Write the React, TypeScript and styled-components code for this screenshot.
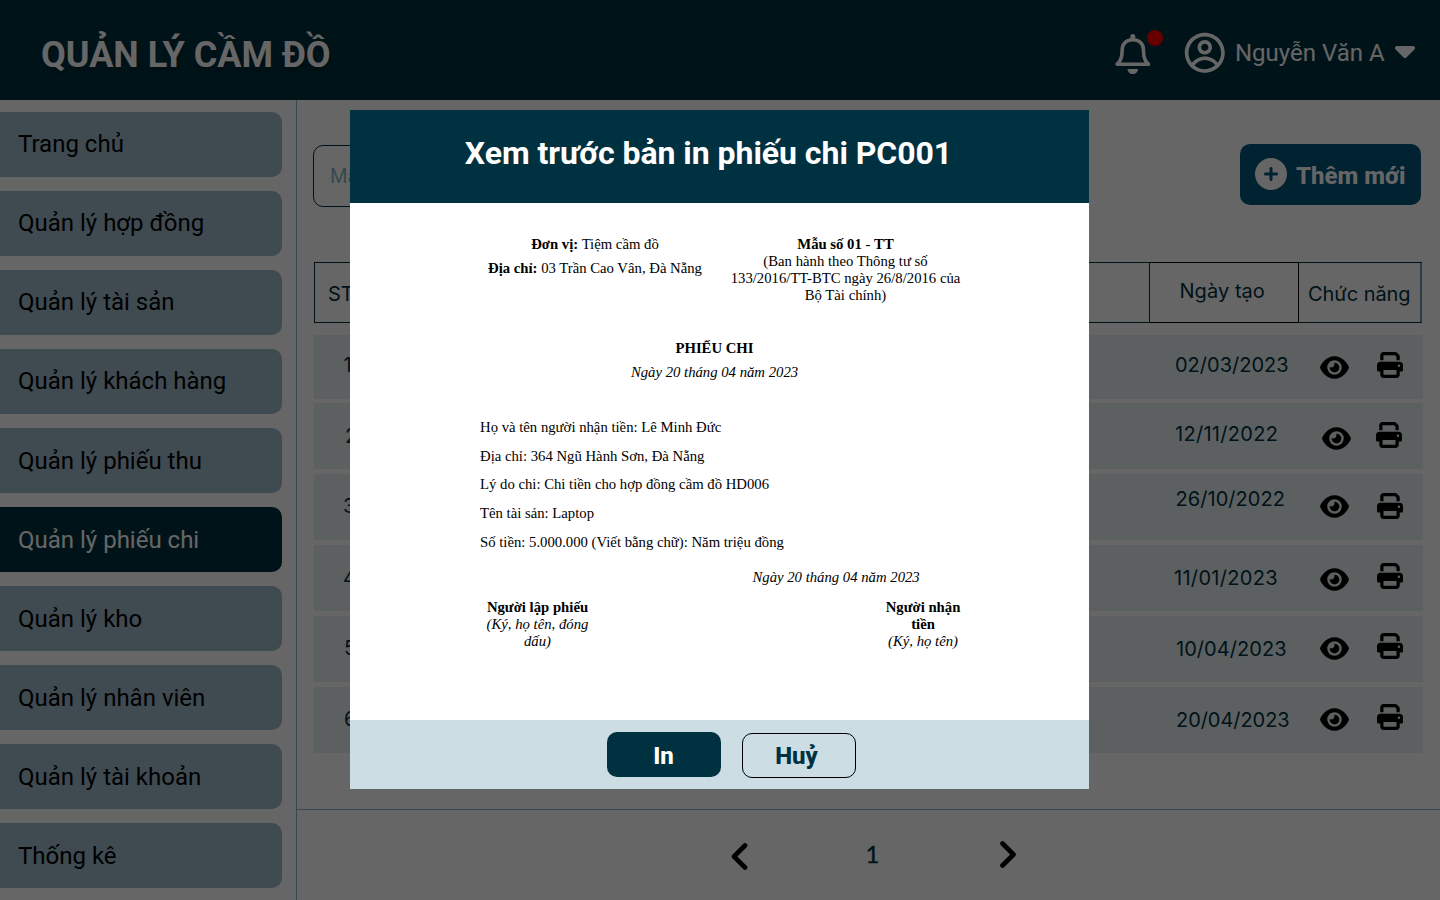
import React from "react";
import styled, { createGlobalStyle } from "styled-components";
import { CgProfile } from "react-icons/cg";
import { FaCaretDown, FaCirclePlus, FaEye, FaPrint } from "react-icons/fa6";

const NAVY = "#003140";

const GlobalStyle = createGlobalStyle`
  *, *::before, *::after { box-sizing: border-box; }
  body { margin: 0; background: #fff; font-family: Roboto, "Liberation Sans", sans-serif; overflow: hidden; }
  p, h1, h2 { margin: 0; }
  svg { display: block; flex: none; }
`;

const Page = styled.div`
  position: relative;
  display: flex;
  flex-direction: column;
  width: 1440px;
  height: 900px;
  overflow: hidden;
  background: #fff;
`;

const TopBar = styled.header`
  display: flex;
  flex: none;
  height: 100px;
  background: ${NAVY};
  color: #fff;
`;

const Brand = styled.h1`
  margin: 34px auto 0 41px;
  font-size: 36px;
  line-height: 42px;
  font-weight: 700;
  white-space: nowrap;
  text-shadow: 0 4px 4px rgba(0, 0, 0, 0.25);
`;

const BellButton = styled.div`
  position: relative;
  width: 40px;
  height: 40px;
  margin: 34px 30.5px 0 0;
`;

const AlertDot = styled.span`
  position: absolute;
  left: 34.5px;
  top: -4px;
  width: 16px;
  height: 16px;
  border-radius: 50%;
  background: #ff0000;
`;

const UserMenu = styled.div`
  display: flex;
  align-items: flex-start;
  margin-right: 19px;
  padding-top: 31.2px;
`;

const UserName = styled.span`
  width: 154px;
  margin: 7.8px 0 0 8px;
  font-size: 24px;
  line-height: 28px;
  white-space: nowrap;
`;

const CaretBox = styled.span`
  margin-top: 2.8px;
`;

const Body = styled.div`
  display: flex;
  flex: 1;
  min-height: 0;
`;

const Sidebar = styled.nav`
  display: flex;
  flex: none;
  flex-direction: column;
  gap: 14px;
  width: 297px;
  padding: 12px 14px 0 0;
  border-right: 1px solid #8ab4c4;
`;

const NavItem = styled.a<{ $active?: boolean }>`
  display: flex;
  flex: none;
  align-items: center;
  height: 65px;
  padding: 0 0 2px 18px;
  border-radius: 0 10px 10px 0;
  background: ${(p) => (p.$active ? NAVY : "#9dbbca")};
  color: ${(p) => (p.$active ? "#fff" : "#000")};
  font-size: 24px;
  line-height: 28px;
  white-space: nowrap;

  &:nth-child(n + 5) {
    padding-bottom: 0;
  }
`;

const Main = styled.main`
  display: flex;
  flex: 1;
  flex-direction: column;
  min-width: 0;
`;

const Toolbar = styled.div`
  display: flex;
  justify-content: space-between;
  height: 162px;
  padding: 44px 19px 0 16px;
`;

const SearchField = styled.div`
  width: 400px;
  height: 62px;
  margin-top: 1px;
  padding: 18px 16px;
  border: 1px solid ${NAVY};
  border-radius: 10px;
  color: #8ab4c4;
  font-size: 20px;
  line-height: 24px;
`;

const AddButton = styled.div`
  display: flex;
  align-items: center;
  gap: 9px;
  width: 181px;
  height: 61px;
  padding: 0 0 2px 15px;
  border-radius: 10px;
  background: #00567a;
  color: #fff;
  font-size: 24px;
  font-weight: 800;
  white-space: nowrap;
`;

const AddLabel = styled.span`
  padding-top: 5px;
`;

const TableHead = styled.div`
  display: flex;
  flex: none;
  width: 1108px;
  height: 61px;
  margin-left: 17px;
  border: solid ${NAVY};
  border-width: 1px 0;
  color: ${NAVY};
  font-family: Inter, sans-serif;
  font-size: 20px;
  line-height: 24px;
`;

const IndexHead = styled.div`
  width: 835px;
  padding: 19px 13px;
  border-left: 1px solid ${NAVY};
`;

const DateHead = styled.div`
  width: 150px;
  margin: -1px 0;
  padding: 16px 0 0 29.5px;
  border: 1px solid #000;
  border-left-color: ${NAVY};
  letter-spacing: 0.05px;
`;

const ActionHead = styled.div`
  flex: 1;
  padding: 19px 0 0 9px;
  border-right: 2px solid #6b9bab;
  letter-spacing: -0.05px;
  white-space: nowrap;
`;

const TableBody = styled.div`
  display: flex;
  flex-direction: column;
  width: 1109px;
  margin: 12px 0 0 17px;
`;

const Row = styled.div<{ $height: number; $gap: number }>`
  display: flex;
  flex: none;
  height: ${(p) => p.$height}px;
  margin-bottom: ${(p) => p.$gap}px;
  background: #e6f0f2;
  color: ${NAVY};
  font-family: Inter, sans-serif;
  font-size: 20px;
  line-height: 24px;
`;

const IndexCell = styled.div<{ $top: number; $left: number }>`
  width: 860px;
  padding: ${(p) => p.$top}px 0 0 ${(p) => p.$left}px;
`;

const DateCell = styled.div<{ $top: number; $left: number; $tracking: number }>`
  width: 146px;
  padding: ${(p) => p.$top}px 0 0 ${(p) => p.$left}px;
  letter-spacing: ${(p) => p.$tracking}px;
  white-space: nowrap;
`;

const IconCell = styled.div<{ $width: number; $top: number; $left: number }>`
  width: ${(p) => p.$width}px;
  padding: ${(p) => p.$top}px 0 0 ${(p) => p.$left}px;
  color: #000;
`;

const Pager = styled.footer`
  display: flex;
  flex: 1;
  margin-top: 56px;
  padding: 33px 0 0 434px;
  border-top: 1px solid #8ab4c4;
  color: #000;
`;

const PageNumber = styled.span`
  width: 134px;
  margin: -3px 0 0 117.5px;
  color: ${NAVY};
  font-family: Lato, sans-serif;
  font-size: 24px;
  line-height: 28px;
  -webkit-text-stroke: 0.35px ${NAVY};
`;

const ArrowBox = styled.span<{ $raised?: boolean }>`
  width: 17px;
  margin-top: ${(p) => (p.$raised ? -2 : 0)}px;
`;

const Overlay = styled.div`
  position: absolute;
  inset: 0;
  padding: 110px 0 0 350px;
  background: rgba(0, 0, 0, 0.6);
`;

const Dialog = styled.section`
  display: flex;
  flex-direction: column;
  width: 739px;
  height: 679px;
  background: #fff;
`;

const DialogTitle = styled.h2`
  flex: none;
  height: 93px;
  padding: 24px 22px 0 0;
  background: ${NAVY};
  color: #fff;
  font-size: 32px;
  line-height: 38px;
  font-weight: 700;
  letter-spacing: -0.04px;
  text-align: center;
  white-space: nowrap;
`;

const Sheet = styled.div`
  flex: 1;
  padding: 33px 0 0 130px;
  color: #000;
  font-family: "Liberation Serif", "Times New Roman", serif;
  font-size: 14.72px;
  line-height: 17px;
  white-space: nowrap;
`;

const SheetTop = styled.div`
  display: flex;
  height: 100px;
  text-align: center;
`;

const Issuer = styled.div`
  width: 230px;
  line-height: 24px;
  margin-top: -4px;
`;

const FormCode = styled.div`
  width: 271px;
`;

const SheetTitle = styled.div`
  width: 469px;
  height: 77px;
  line-height: 24px;
  text-align: center;
`;

const Details = styled.div`
  line-height: 28.7px;
`;

const SignDate = styled.p`
  padding: 12px 0 0 272.5px;
  font-style: italic;
`;

const Signatures = styled.div`
  display: flex;
  justify-content: space-between;
  width: 486px;
  padding: 13px 0 0 0;
  text-align: center;
`;

const Signature = styled.div<{ $width: number }>`
  width: ${(p) => p.$width}px;
`;

const DialogFooter = styled.div`
  display: flex;
  flex: none;
  gap: 21px;
  height: 69px;
  padding: 12px 0 0 257px;
  background: #ccdde3;
`;

const DialogButton = styled.div<{ $primary?: boolean }>`
  width: 114px;
  height: 45px;
  margin-top: ${(p) => (p.$primary ? 0 : 1)}px;
  padding: ${(p) => (p.$primary ? "10px 1px 0 0" : "8px 5px 0 0")};
  border: ${(p) => (p.$primary ? "none" : "1px solid #000")};
  border-radius: 10px;
  background: ${(p) => (p.$primary ? NAVY : "transparent")};
  color: ${(p) => (p.$primary ? "#fff" : NAVY)};
  font-size: 24px;
  line-height: 28px;
  font-weight: 800;
  text-align: center;
`;

const BellIcon = () => (
  <svg width="40" height="40" viewBox="0 0 40 40" fill="none">
    <path
      d="M4.1 30.2C7.4 27.3 9.1 22.6 9.1 17.2V15.8C9.1 9.6 13.6 5.8 19.8 5.8S30.5 9.6 30.5 15.8V17.2C30.5 22.6 32.2 27.3 35.5 30.2Z"
      stroke="currentColor"
      strokeWidth="3.6"
      strokeLinejoin="round"
    />
    <path d="M17.3 5.5V2.5a2.5 2.5 0 0 1 5 0v3z" fill="currentColor" />
    <path d="M14.5 34.9h10.6a5.3 5.2 0 0 1-10.6 0z" fill="currentColor" />
  </svg>
);

const Chevron = ({ points }: { points: string }) => (
  <svg width="17" height="27" viewBox="0 0 17 27" fill="none">
    <polyline
      points={points}
      stroke="currentColor"
      strokeWidth="4.6"
      strokeLinecap="round"
      strokeLinejoin="round"
    />
  </svg>
);

const navItems = [
  "Trang chủ",
  "Quản lý hợp đồng",
  "Quản lý tài sản",
  "Quản lý khách hàng",
  "Quản lý phiếu thu",
  "Quản lý phiếu chi",
  "Quản lý kho",
  "Quản lý nhân viên",
  "Quản lý tài khoản",
  "Thống kê",
];

const rows = [
  { date: "02/03/2023", height: 64, gap: 4, num: [18, 29.5], day: [18, 1, 0], eye: [17.5, 0], print: [17, 1] },
  { date: "12/11/2022", height: 66, gap: 5, num: [21, 31], day: [19, 1, 0.3], eye: [20.5, 2], print: [19, 0] },
  { date: "26/10/2022", height: 66, gap: 5, num: [20, 29], day: [13, 1.5, 0.05], eye: [17.5, 0], print: [19, 1] },
  { date: "11/01/2023", height: 66, gap: 5, num: [21, 29], day: [21, 0, 0.3], eye: [19.5, 0], print: [18, 1] },
  { date: "10/04/2023", height: 66, gap: 5, num: [20, 30], day: [21, 2, 0.05], eye: [17.5, 0], print: [17, 1] },
  { date: "20/04/2023", height: 66, gap: 0, num: [20, 30], day: [21, 2, -0.05], eye: [17.5, 0], print: [17, 1] },
];

export default function App() {
  return (
    <Page>
      <GlobalStyle />
      <TopBar>
        <Brand>QUẢN LÝ CẦM ĐỒ</Brand>
        <BellButton>
          <BellIcon />
          <AlertDot />
        </BellButton>
        <UserMenu>
          <CgProfile size={43.6} />
          <UserName>Nguyễn Văn A</UserName>
          <CaretBox>
            <FaCaretDown size={32} />
          </CaretBox>
        </UserMenu>
      </TopBar>
      <Body>
        <Sidebar>
          {navItems.map((label) => (
            <NavItem key={label} $active={label === "Quản lý phiếu chi"}>
              {label}
            </NavItem>
          ))}
        </Sidebar>
        <Main>
          <Toolbar>
            <SearchField>Mã phiếu chi</SearchField>
            <AddButton>
              <FaCirclePlus size={32} />
              <AddLabel>Thêm mới</AddLabel>
            </AddButton>
          </Toolbar>
          <TableHead>
            <IndexHead>STT</IndexHead>
            <DateHead>Ngày tạo</DateHead>
            <ActionHead>Chức năng</ActionHead>
          </TableHead>
          <TableBody>
            {rows.map((row, i) => (
              <Row key={row.date} $height={row.height} $gap={row.gap}>
                <IndexCell $top={row.num[0]} $left={row.num[1]}>
                  {i + 1}
                </IndexCell>
                <DateCell $top={row.day[0]} $left={row.day[1]} $tracking={row.day[2]}>
                  {row.date}
                </DateCell>
                <IconCell $width={56} $top={row.eye[0]} $left={row.eye[1]}>
                  <FaEye size={29} />
                </IconCell>
                <IconCell $width={30} $top={row.print[0]} $left={row.print[1]}>
                  <FaPrint size={26} />
                </IconCell>
              </Row>
            ))}
          </TableBody>
          <Pager>
            <ArrowBox>
              <Chevron points="14,2.5 3,13.5 14,24.5" />
            </ArrowBox>
            <PageNumber>1</PageNumber>
            <ArrowBox $raised>
              <Chevron points="2.5,2.5 13.5,13.5 2.5,24.5" />
            </ArrowBox>
          </Pager>
        </Main>
      </Body>
      <Overlay>
        <Dialog>
          <DialogTitle>Xem trước bản in phiếu chi PC001</DialogTitle>
          <Sheet>
            <SheetTop>
              <Issuer>
                <p>
                  <b>Đơn vị:</b> Tiệm cầm đồ
                </p>
                <p>
                  <b>Địa chỉ:</b> 03 Trần Cao Vân, Đà Nẵng
                </p>
              </Issuer>
              <FormCode>
                <p>
                  <b>Mẫu số 01</b> - <b>TT</b>
                </p>
                <p>(Ban hành theo Thông tư số</p>
                <p>133/2016/TT-BTC ngày 26/8/2016 của</p>
                <p>Bộ Tài chính)</p>
              </FormCode>
            </SheetTop>
            <SheetTitle>
              <p>
                <b>PHIẾU CHI</b>
              </p>
              <p>
                <i>Ngày 20 tháng 04 năm 2023</i>
              </p>
            </SheetTitle>
            <Details>
              <p>Họ và tên người nhận tiền: Lê Minh Đức</p>
              <p>Địa chỉ: 364 Ngũ Hành Sơn, Đà Nẵng</p>
              <p>Lý do chi: Chi tiền cho hợp đồng cầm đồ HD006</p>
              <p>Tên tài sản: Laptop</p>
              <p>Số tiền: 5.000.000 (Viết bằng chữ): Năm triệu đồng</p>
            </Details>
            <SignDate>Ngày 20 tháng 04 năm 2023</SignDate>
            <Signatures>
              <Signature $width={115}>
                <p>
                  <b>Người lập phiếu</b>
                </p>
                <p>
                  <i>(Ký, họ tên, đóng</i>
                </p>
                <p>
                  <i>dấu)</i>
                </p>
              </Signature>
              <Signature $width={86}>
                <p>
                  <b>Người nhận</b>
                </p>
                <p>
                  <b>tiền</b>
                </p>
                <p>
                  <i>(Ký, họ tên)</i>
                </p>
              </Signature>
            </Signatures>
          </Sheet>
          <DialogFooter>
            <DialogButton $primary>In</DialogButton>
            <DialogButton>Huỷ</DialogButton>
          </DialogFooter>
        </Dialog>
      </Overlay>
    </Page>
  );
}
